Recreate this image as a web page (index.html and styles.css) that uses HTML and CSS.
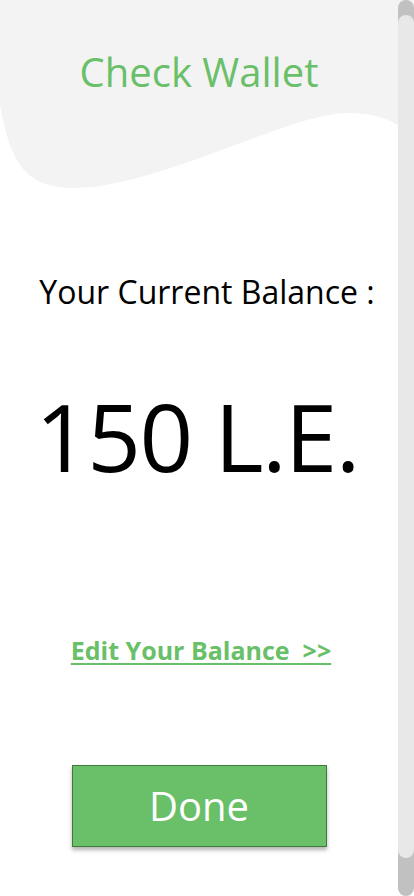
FILE: index.html
```html
<!DOCTYPE html>
<html lang="en">
<head>
<meta charset="utf-8">
<title>Check Wallet</title>
<link rel="stylesheet" href="styles.css">
</head>
<body>
<div class="page">
  <header class="header">
    <svg class="wave" viewBox="0 0 398 190" preserveAspectRatio="none" aria-hidden="true">
      <path d="M0 0 H398 V137 C380 120 362 113 333 113 C280 113 150 188 72 188 C22 188 10 160 0 105 Z" fill="#f3f3f3"/>
    </svg>
    <h1 class="title">Check Wallet</h1>
  </header>
  <main class="content">
    <p class="label">Your Current Balance :</p>
    <p class="amount">150 L.E.</p>
    <a class="edit" href="#">Edit Your Balance &nbsp;&gt;&gt;</a>
    <button class="done" type="button">Done</button>
  </main>
</div>
<div class="scrollbar"><div class="scrollbar-thumb"></div></div>
</body>
</html>
```
FILE: styles.css
```css
html, body {
  margin: 0;
  padding: 0;
  background: #ffffff;
}
body {
  font-family: "Open Sans", "Noto Sans", sans-serif;
  width: 414px;
  height: 896px;
  overflow: hidden;
  position: relative;
}
.page {
  width: 398px;
  display: flex;
  flex-direction: column;
}
.header {
  position: relative;
  height: 190px;
  display: flex;
  justify-content: center;
}
.wave {
  position: absolute;
  left: 0;
  top: 0;
  width: 414px;
  height: 190px;
}
.title {
  position: relative;
  margin: 45px 0 0;
  font-size: 40px;
  font-weight: 400;
  line-height: 54px;
  color: #6abf69;
}
.content {
  display: flex;
  flex-direction: column;
  align-items: center;
}
.label {
  margin: 80px 0 0;
  padding-left: 16px;
  font-size: 32px;
  line-height: 44px;
  color: #000;
  white-space: nowrap;
}
.amount {
  margin: 58px 0 0;
  padding-right: 4px;
  font-size: 94px;
  line-height: 128px;
  color: #000;
  letter-spacing: -1.6px;
  white-space: nowrap;
}
.edit {
  margin-top: 133px;
  font-size: 25px;
  font-weight: 700;
  line-height: 34px;
  color: #6abf69;
  text-decoration: underline;
  text-underline-offset: 3px;
  text-decoration-thickness: 2px;
  padding-left: 4px;
  white-space: nowrap;
}
.done {
  margin-top: 98px;
  width: 255px;
  height: 82px;
  background: #6abf69;
  border: 1px solid #3e7a3c;
  box-shadow: 0 3px 4px rgba(0, 0, 0, 0.3);
  color: #fff;
  font-family: "Open Sans", "Noto Sans", sans-serif;
  font-size: 40px;
  line-height: 54px;
  padding: 0;
}
.scrollbar {
  position: absolute;
  top: 0;
  right: 0;
  width: 16px;
  height: 896px;
  background: #c1c1c1;
  border-radius: 8px;
}
.scrollbar-thumb {
  position: absolute;
  top: 15px;
  left: 0;
  width: 16px;
  height: 843px;
  background: #e8e8e8;
  border-radius: 8px;
}
```
